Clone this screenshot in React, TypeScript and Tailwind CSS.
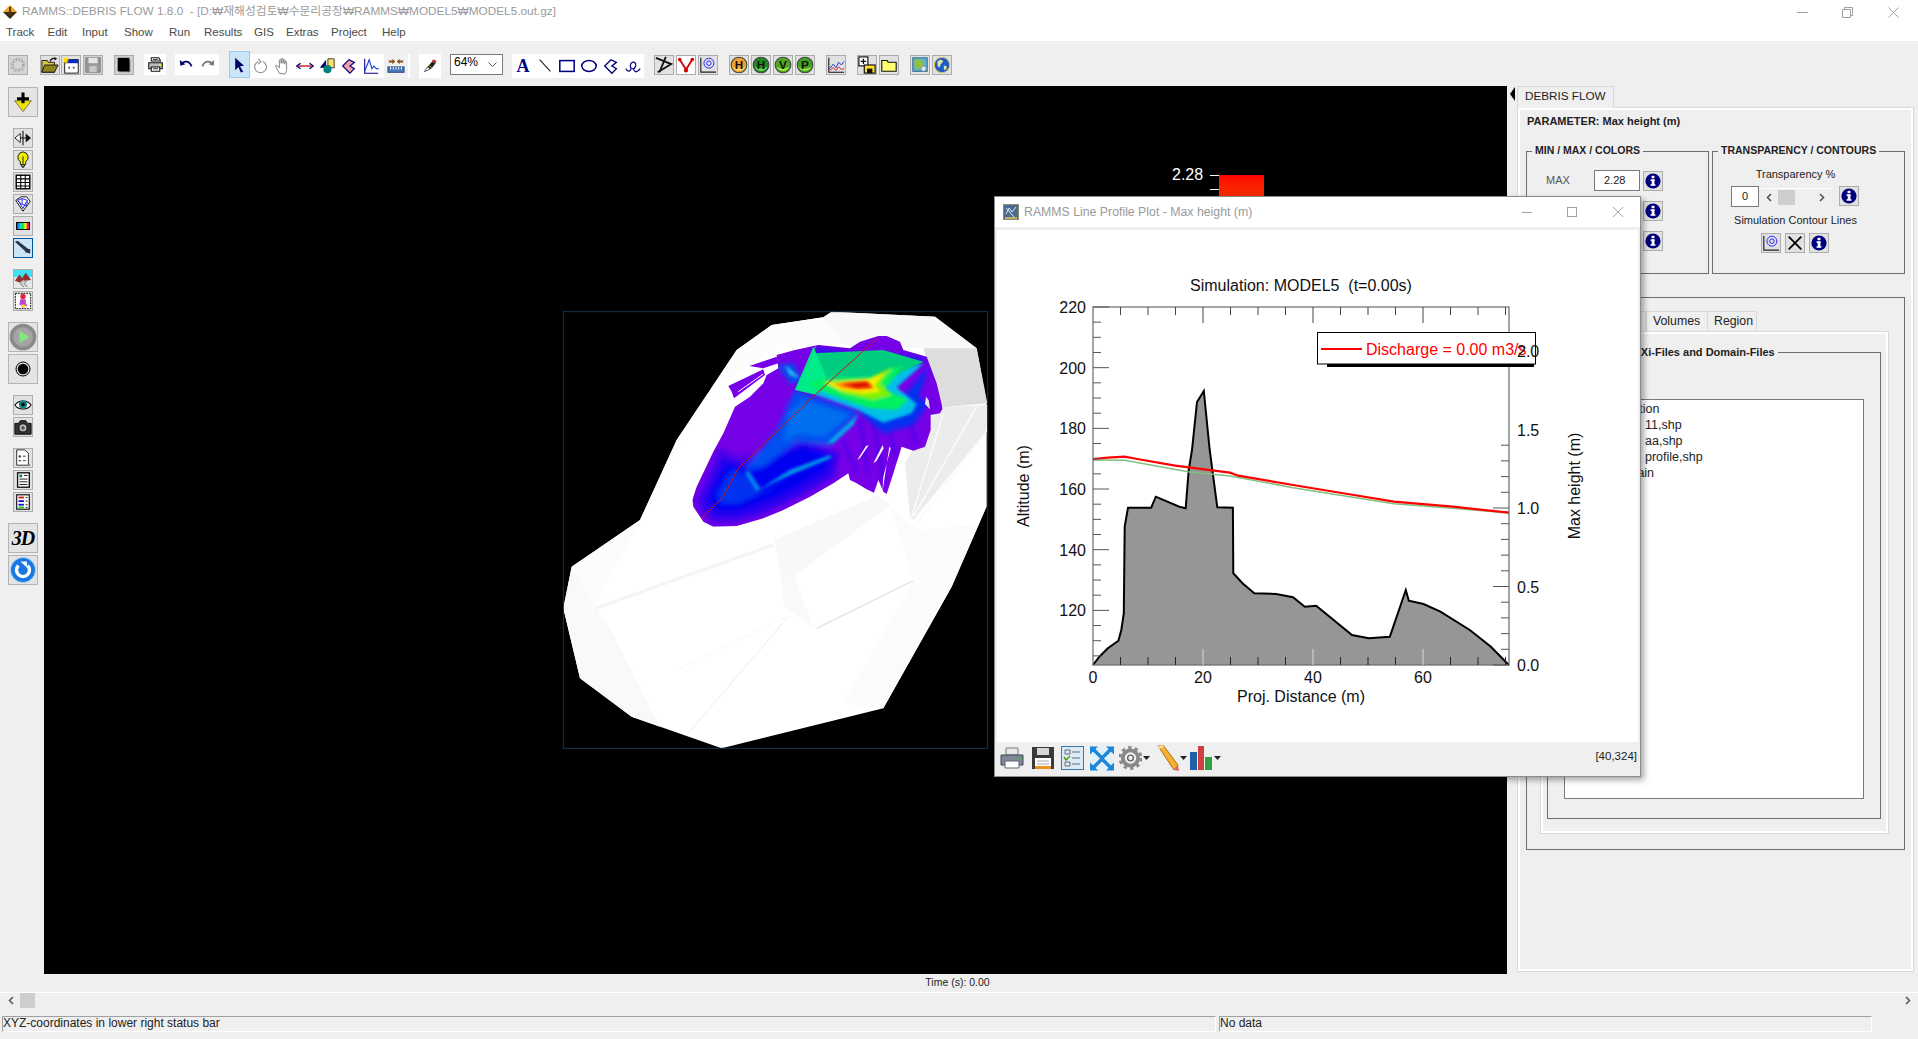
import type { ReactNode } from "react";

const Svg = ({ s = 18, children }: { s?: number; children: ReactNode }) => (
  <svg width={s} height={s} viewBox="0 0 20 20" className="block shrink-0">
    {children}
  </svg>
);

// raised toolbar button, the fill and border come in as whole classes
const Btn = ({
  children,
  className = "",
  tone = "bg-[#e1e1e1] border-[#adadad]",
}: {
  children: ReactNode;
  className?: string;
  tone?: string;
}) => (
  <div className={`w-5 h-5 shrink-0 border flex items-center justify-center ${tone} ${className}`}>{children}</div>
);

const BigBtn = ({ children, className = "" }: { children: ReactNode; className?: string }) => (
  <div className={`w-[30px] h-[30px] shrink-0 border border-[#b4b4b4] bg-[#e4e4e4] flex items-center justify-center ${className}`}>
    {children}
  </div>
);

const Flat = ({ children }: { children: ReactNode }) => (
  <div className="w-[22px] h-6 shrink-0 flex items-center justify-center">{children}</div>
);

const InfoIcon = () => (
  <Svg s={16}>
    <circle cx="10" cy="10" r="9.5" fill="#000080" />
    <rect x="8.2" y="3.5" width="3.6" height="3" fill="#fff" />
    <rect x="7" y="8" width="5" height="2" fill="#fff" />
    <rect x="8.4" y="8" width="3.4" height="7" fill="#fff" />
    <rect x="7" y="14" width="6" height="2" fill="#fff" />
  </Svg>
);

const Info = () => (
  <Btn>
    <InfoIcon />
  </Btn>
);

const Ball = ({ c1, c2, t }: { c1: string; c2: string; t: string }) => (
  <Svg>
    <circle cx="10" cy="10" r="8.7" fill={c1} stroke="#444" strokeWidth="1.2" />
    <path d="M3 12a7.5 7 0 0 0 14 0a9 6 0 0 1-14 0z" fill={c2} />
    <text x="10" y="14.5" textAnchor="middle" fontSize="13" fontWeight="700" fontFamily="Liberation Sans" fill="#111">
      {t}
    </text>
  </Svg>
);

const ContourIcon = () => (
  <Svg>
    <path d="M2 2v16h17" fill="none" stroke="#222" strokeWidth="1.3" />
    <circle cx="11" cy="8" r="5.5" fill="none" stroke="#1a1aff" strokeWidth="1" />
    <circle cx="11" cy="8" r="2.5" fill="none" stroke="#1a1aff" strokeWidth="1" />
  </Svg>
);

const PrinterIcon = ({ s = 18 }: { s?: number }) => (
  <Svg s={s}>
    <path d="M5 2h9l2 4H5z" fill="#fff" stroke="#111" strokeWidth="1.2" />
    <path d="M2 8h16v7H2z" fill="#bbb" stroke="#111" strokeWidth="1.2" />
    <path d="M5 13h10v5H5z" fill="#fff" stroke="#111" strokeWidth="1.2" />
    <path d="M7 4h6M7 15h6" stroke="#111" />
    <rect x="14" y="9.5" width="2.5" height="1.5" fill="#ff0" />
  </Svg>
);

function TitleBar() {
  const menus = [
    ["Track", "w-[41.5px]"],
    ["Edit", "w-[34.5px]"],
    ["Input", "w-[42px]"],
    ["Show", "w-[45px]"],
    ["Run", "w-[35px]"],
    ["Results", "w-[50px]"],
    ["GIS", "w-[32px]"],
    ["Extras", "w-[45px]"],
    ["Project", "w-[51px]"],
    ["Help", "w-[40px]"],
  ];
  return (
    <div className="h-[41px] bg-white shrink-0">
      <div className="h-[24px] flex items-center pl-[3px]">
        <svg width="14" height="14" viewBox="0 0 14 14" className="shrink-0">
          <path d="M7 0l7 7H0z" fill="#e8a41c" />
          <path d="M7 14l7-7H0z" fill="#3a2a10" />
          <path d="M6 2h2v8H6z" fill="#5a3a10" />
        </svg>
        <span className="ml-[5px] text-[11.8px] text-[#9b9b9b] whitespace-pre leading-none">
          RAMMS::DEBRIS FLOW 1.8.0  - [D:₩재해성검토₩수문리공장₩RAMMS₩MODEL5₩MODEL5.out.gz]
        </span>
        <div className="ml-auto flex items-center">
          <div className="w-[11px] h-px bg-[#a0a0a0] mr-[34px]" />
          <svg width="11" height="11" viewBox="0 0 11 11" className="mr-[35px]">
            <path d="M2.5 2.5V.5h8v8h-2M.5 2.5h8v8h-8z" fill="none" stroke="#a0a0a0" />
          </svg>
          <svg width="11" height="11" viewBox="0 0 11 11" className="mr-[19px]">
            <path d="M.5.5l10 10M10.5.5l-10 10" stroke="#a0a0a0" />
          </svg>
        </div>
      </div>
      <div className="h-[17px] flex items-center pl-[6px] text-[11.5px] text-[#4a4a4a] leading-none">
        {menus.map(([m, w]) => (
          <span key={m} className={w}>
            {m}
          </span>
        ))}
      </div>
    </div>
  );
}

function Toolbar() {
  return (
    <div className="h-[45px] shrink-0 bg-[#efefef] flex items-start pt-[14px] pl-2">
      <Btn tone="bg-[#d6d6d6] border-[#adadad]">
        <Svg>
          <circle cx="10" cy="10" r="6" fill="none" stroke="#a8a8a8" strokeWidth="3" strokeDasharray="2 1.5" />
          <circle cx="10" cy="10" r="7.8" fill="none" stroke="#bcbcbc" strokeWidth="2" strokeDasharray="2 3" />
        </Svg>
      </Btn>
      <Btn className="ml-3">
        <Svg>
          <path d="M1 5h6l1 2h7v11H1z" fill="#d8c848" stroke="#111" />
          <path d="M4 10h15l-4 8H1z" fill="#8c8420" stroke="#111" />
          <path d="M10 6c1-3 4-4 6-3" fill="none" stroke="#111" strokeWidth="1.5" />
          <path d="M15 1l3 2-3 2z" fill="#111" />
        </Svg>
      </Btn>
      <Btn className="ml-[1px]">
        <Svg>
          <rect x="3" y="4" width="15" height="15" fill="#fff" stroke="#111" />
          <rect x="3" y="4" width="15" height="4" fill="#0a28c8" />
          <path d="M2 1l2 2 1-2 1 3 2 0-2 2 0 3-2-2-3 1 1-3z" fill="#ffd800" />
          <rect x="7" y="12" width="2" height="2" fill="#555" />
          <rect x="12" y="12" width="2" height="2" fill="#555" />
        </Svg>
      </Btn>
      <Btn className="ml-[2px]" tone="bg-[#d2d2d2] border-[#adadad]">
        <Svg>
          <path d="M2 2h16v16H2z" fill="#9a9a9a" stroke="#777" />
          <rect x="5" y="2" width="10" height="6" fill="#e6e6e6" />
          <rect x="6" y="11" width="8" height="7" fill="#c8c8c8" />
        </Svg>
      </Btn>
      <Btn className="ml-[11px]" tone="bg-[#cfcfcf] border-[#adadad]">
        <Svg>
          <rect x="5" y="4" width="12" height="14" fill="#777" />
          <rect x="3" y="2" width="13" height="15" fill="#000" />
        </Svg>
      </Btn>
      <div className="ml-[10px] -mt-px w-[22px] h-[21px] bg-white flex items-center justify-center shrink-0">
        <PrinterIcon s={17} />
      </div>
      <div className="ml-[9px] -mt-px w-[44px] h-[21px] bg-white flex items-center shrink-0">
        <div className="w-[22px] flex justify-center">
          <Svg s={14}>
            <path d="M4 9c3-6 11-5 14 3" fill="none" stroke="#000070" strokeWidth="2.5" />
            <path d="M1 3l1 8 7-2z" fill="#000070" />
          </Svg>
        </div>
        <div className="w-[22px] flex justify-center">
          <Svg s={14}>
            <path d="M16 9C13 3 5 4 2 12" fill="none" stroke="#777" strokeWidth="2.5" />
            <path d="M19 3l-1 8-7-2z" fill="#777" />
          </Svg>
        </div>
      </div>
      <div className="ml-[10px] -mt-1 w-[21px] h-[27px] bg-[#cce4f7] border border-[#99c9ef] flex items-center justify-center shrink-0">
        <Svg s={16}>
          <path d="M4 1l11 10-5 .5 4 7-3 1-3-7-4 4z" fill="#000060" />
        </Svg>
      </div>
      <div className="-mt-[1px] h-6 w-[160px] bg-white flex items-center shrink-0">
        <Flat>
          <Svg>
            <path d="M7 5a6.5 6.5 0 1 0 5 0" fill="none" stroke="#8a8a8a" strokeWidth="1.2" />
            <path d="M7 2l3 3-3 3" fill="none" stroke="#8a8a8a" strokeWidth="1.2" />
          </Svg>
        </Flat>
        <Flat>
          <Svg>
            <path
              d="M6 18L2 11c-1-2 1-2 2-1l2 2V4c0-2 2-2 2 0v3-4c0-2 2-2 2 0v4-3c0-2 2-2 2 0v4-2c0-2 2-2 2 0v8c0 2-1 3-2 5z"
              fill="#fff"
              stroke="#777"
            />
          </Svg>
        </Flat>
        <Flat>
          <Svg>
            <path d="M3 10h14" stroke="#d01010" strokeWidth="1.5" />
            <path d="M5 7l-4 3 4 3M15 7l4 3-4 3" fill="none" stroke="#000080" strokeWidth="1.5" />
          </Svg>
        </Flat>
        <Flat>
          <Svg>
            <path d="M11 2h7v10h-7z" fill="#ffe060" stroke="#333" />
            <path d="M9 3v9H2z" fill="#000060" />
            <circle cx="10.500" cy="13.500" r="4.500" fill="#008080" />
          </Svg>
        </Flat>
        <Flat>
          <Svg>
            <path d="M3 10l7-7 6 3-5 4 5 3-5 5z" fill="#f4a0a8" stroke="#000080" strokeWidth="1.3" />
          </Svg>
        </Flat>
        <Flat>
          <Svg>
            <path d="M3 2v16h15" fill="none" stroke="#000080" strokeWidth="1.2" />
            <path d="M3 16L8 3l3 10 2-3 3 3h3" fill="none" stroke="#1838d8" strokeWidth="1.2" />
          </Svg>
        </Flat>
        <div className="w-[28px] flex justify-center">
          <div className="w-[24px] h-[24px] bg-[#f0f0f0] flex items-center justify-center">
            <Svg>
              <path d="M2 5h6M12 5h6" stroke="#8a5010" strokeWidth="2" />
              <path d="M6 2l3 3-3 3M14 2l-3 3 3 3" fill="#8a5010" />
              <rect x="1" y="11" width="18" height="6" fill="#4878b8" stroke="#204880" />
              <path d="M4 11v3M7 11v3M10 11v3M13 11v3M16 11v3" stroke="#fff" />
            </Svg>
          </div>
        </div>
      </div>
      <div className="ml-[9px] -mt-px w-[22px] h-6 bg-white flex items-center justify-center shrink-0">
        <Svg s={16}>
          <path d="M3 17l4-6 3 3z" fill="#fff" stroke="#333" />
          <path d="M7 11l6-7 4 3-6 7z" fill="#222" />
          <path d="M12 3l5 4 1-3-3-2z" fill="#d02020" />
          <path d="M8 9l5 4" stroke="#e8c020" />
        </Svg>
      </div>
      <div className="ml-[9px] -mt-px w-[53px] h-[21px] bg-white border border-[#7a7a7a] flex items-start pl-[3px] text-[12px] leading-[15px] shrink-0">
        64%
        <svg width="9" height="5" viewBox="0 0 9 5" className="ml-auto mr-[5px] mt-[7px]">
          <path d="M.5.5l4 4 4-4" fill="none" stroke="#555" />
        </svg>
      </div>
      <div className="ml-[9px] -mt-px w-[132px] h-6 bg-white flex items-center shrink-0">
        <Flat>
          <span className="font-['Liberation_Serif',serif] font-bold text-[18px] leading-none text-[#000080]">A</span>
        </Flat>
        <Flat>
          <Svg>
            <path d="M4 3l12 13" stroke="#222" strokeWidth="1.2" />
          </Svg>
        </Flat>
        <Flat>
          <Svg>
            <rect x="2" y="4" width="16" height="12" fill="none" stroke="#000080" strokeWidth="1.7" />
          </Svg>
        </Flat>
        <Flat>
          <Svg>
            <ellipse cx="10" cy="10" rx="8" ry="6" fill="none" stroke="#000080" strokeWidth="1.7" />
          </Svg>
        </Flat>
        <Flat>
          <Svg>
            <path d="M3 10l7-7 6 3-5 4 5 3-5 5z" fill="none" stroke="#000080" strokeWidth="1.5" />
          </Svg>
        </Flat>
        <Flat>
          <Svg>
            <path d="M2 13c3 5 5 2 6 0-4-8 6-10 5-3-1 3-3 3-3 3 3 5 5 4 8 0" fill="none" stroke="#000080" strokeWidth="1.4" />
          </Svg>
        </Flat>
      </div>
      <Btn className="ml-[10px]">
        <Svg>
          <path d="M1 2l17 7L3 18" fill="none" stroke="#111" strokeWidth="2" />
          <path d="M12 1L5 18" stroke="#111" strokeWidth="2" />
        </Svg>
      </Btn>
      <Btn className="ml-[2px]" tone="bg-white border-[#adadad]">
        <Svg>
          <path d="M3 4l7 11 7-11" fill="none" stroke="#d00000" strokeWidth="2" />
          <circle cx="3" cy="4" r="2" fill="#d00000" />
          <circle cx="17" cy="4" r="2" fill="#d00000" />
          <circle cx="10" cy="16" r="2.3" fill="#d00000" />
        </Svg>
      </Btn>
      <Btn className="ml-[2px]">
        <ContourIcon />
      </Btn>
      <Btn className="ml-[11px]">
        <Ball c1="#f0a030" c2="#ffe070" t="H" />
      </Btn>
      <Btn className="ml-[2px]">
        <Ball c1="#208820" c2="#80e060" t="H" />
      </Btn>
      <Btn className="ml-[2px]">
        <Ball c1="#50a820" c2="#b0f040" t="V" />
      </Btn>
      <Btn className="ml-[2px]">
        <Ball c1="#40a020" c2="#a0e840" t="P" />
      </Btn>
      <Btn className="ml-[11px]">
        <Svg>
          <path d="M2 2v16h17" fill="none" stroke="#111" strokeWidth="1.2" />
          <path d="M3 14l4-5 3 4 3-6 3 3 3-4" fill="none" stroke="#1030d0" />
          <path d="M3 16l4-3 3 3 3-4 3 3 3-1" fill="none" stroke="#e01010" />
        </Svg>
      </Btn>
      <Btn className="ml-[11px]">
        <Svg>
          <rect x="1" y="1" width="10" height="10" fill="#fff" stroke="#111" strokeWidth="1.3" />
          <path d="M3 6h6M6 3v6" stroke="#111" strokeWidth="1.5" />
          <rect x="7" y="10" width="12" height="9" fill="#ffe030" stroke="#111" strokeWidth="1.3" />
          <rect x="10" y="14" width="6" height="5" fill="#111" />
        </Svg>
      </Btn>
      <Btn className="ml-[2px]">
        <Svg>
          <path d="M2 5h6l1 2h9v10H2z" fill="#ffff70" stroke="#111" strokeWidth="1.2" />
        </Svg>
      </Btn>
      <Btn className="ml-[11px]">
        <Svg>
          <rect x="2" y="2" width="16" height="15" fill="#60b0d0" stroke="#206080" />
          <path d="M4 4l8 0 2 6-6 5-4-3z" fill="#90c040" />
          <circle cx="14" cy="14" r="3" fill="#d0e8f8" stroke="#888" />
        </Svg>
      </Btn>
      <Btn className="ml-[2px]">
        <Svg>
          <circle cx="10" cy="10" r="8.500" fill="#1c5cc8" stroke="#f0c840" strokeWidth="1" />
          <path d="M5 6c3-3 6-2 6 0s-3 2-3 5-3 1-3-1zM12 11c3-1 4 1 3 3s-3 2-3 0z" fill="#e8e0a0" />
        </Svg>
      </Btn>
    </div>
  );
}

function Sidebar() {
  return (
    <div className="w-[44px] shrink-0 flex flex-col items-start pt-px">
      <BigBtn className="ml-2">
        <Svg s={24}>
          <path d="M3 9h14l-7 9z" fill="#f0e000" stroke="#555" strokeWidth=".6" />
          <path d="M8.700 2h2.600v4H15v2.600H5V6h3.700z" fill="#000" />
          <path d="M8.700 8h2.600v3H8.700z" fill="#000" />
        </Svg>
      </BigBtn>
      <div className="ml-[13px] mt-[11px] flex flex-col gap-[2px]">
        <Btn>
          <Svg>
            <path d="M1 10l6-5v10z" fill="#fff" stroke="#111" />
            <path d="M19 10l-6-5v10z" fill="#111" />
            <path d="M10 2v16M7 10h6" stroke="#111" strokeWidth="1.2" />
          </Svg>
        </Btn>
        <Btn>
          <Svg>
            <path d="M10 1a6 6 0 0 1 3 11v3H7v-3a6 6 0 0 1 3-11z" fill="#f0f000" stroke="#111" />
            <path d="M8 15l1 3h2l1-3" fill="#888" stroke="#111" />
            <path d="M10 6v9" stroke="#111" />
          </Svg>
        </Btn>
        <Btn>
          <Svg>
            <rect x="2.500" y="2.500" width="15" height="15" fill="#fff" stroke="#000" strokeWidth="1.5" />
            <path d="M7.500 2v16M12.500 2v16M2 6.500h16M2 10.500h16M2 14.500h16" stroke="#000" strokeWidth="1.2" />
          </Svg>
        </Btn>
        <Btn>
          <Svg>
            <path d="M2 6l6-4h6l4 5-8 11z" fill="#fff" stroke="#000" />
            <path d="M4 6l5-2 6 2-1 6-6-2zM5 7l5 8M9 4v6M14 7l-4 8" fill="none" stroke="#1a1ae0" />
          </Svg>
        </Btn>
        <Btn>
          <svg width="14" height="8" viewBox="0 0 14 8" className="block">
            <defs>
              <linearGradient id="rb">
                <stop offset="0" stopColor="#2020ff" />
                <stop offset=".3" stopColor="#00e0e0" />
                <stop offset=".5" stopColor="#20e020" />
                <stop offset=".7" stopColor="#ffff00" />
                <stop offset=".85" stopColor="#ff2020" />
                <stop offset="1" stopColor="#e000e0" />
              </linearGradient>
            </defs>
            <rect x=".5" y=".5" width="13" height="7" fill="url(#rb)" stroke="#000" />
          </svg>
        </Btn>
        <Btn tone="bg-[#cce4f7] border-[#005499]">
          <Svg>
            <path d="M1 3l3-1 12 9 2 0 0 5-5-1-1-2z" fill="#2c3448" />
          </Svg>
        </Btn>
      </div>
      <div className="ml-[13px] mt-[11px] flex flex-col gap-[2px]">
        <Btn>
          <Svg>
            <rect width="20" height="8" fill="#40e0f0" />
            <rect y="8" width="20" height="12" fill="#e8e8e8" />
            <path d="M1 12l5-7 3 4 4-6 6 8-6 1-4 0-3 2z" fill="#903030" />
            <path d="M15 11l-4 4 4 4M11 11l-4 4 4 4" fill="none" stroke="#a0a0a0" strokeWidth="1.5" />
          </Svg>
        </Btn>
        <Btn>
          <Svg>
            <rect x="1.500" y="1.500" width="17" height="17" fill="#fff" stroke="#000" strokeDasharray="2 1" />
            <circle cx="10" cy="5" r="3" fill="#e02040" />
            <path d="M7 8h6v4l2 4-3-1-2 3-2-3-2-1z" fill="#c040d0" />
            <path d="M8 14h4v3H8z" fill="#f0e020" />
          </Svg>
        </Btn>
      </div>
      <BigBtn className="ml-2 mt-[11px]">
        <Svg s={28}>
          <circle cx="10" cy="10" r="9.500" fill="#8a8a8a" />
          <circle cx="10" cy="10" r="7" fill="#a4a4a4" />
          <path d="M7.500 5.500l7 4.500-7 4.500z" fill="#80e880" />
        </Svg>
      </BigBtn>
      <BigBtn className="ml-2 mt-[2px]">
        <Svg s={20}>
          <circle cx="10" cy="10" r="7" fill="none" stroke="#000" strokeWidth="1" />
          <circle cx="10" cy="10" r="5.300" fill="#000" />
        </Svg>
      </BigBtn>
      <div className="ml-[13px] mt-[11px] flex flex-col gap-[2px]">
        <Btn>
          <Svg>
            <path d="M1 10c4-6 14-6 18 0-4 6-14 6-18 0z" fill="#fff" stroke="#000" strokeWidth="1.2" />
            <circle cx="10" cy="9.500" r="4.500" fill="#108080" />
            <circle cx="10" cy="9.500" r="2" fill="#000" />
          </Svg>
        </Btn>
        <Btn>
          <Svg>
            <path d="M1 6h4l2-3h6l2 3h4v12H1z" fill="#333" stroke="#000" />
            <circle cx="10" cy="11" r="4.500" fill="#bbb" stroke="#000" />
            <circle cx="10" cy="11" r="2" fill="#555" />
          </Svg>
        </Btn>
      </div>
      <div className="ml-[13px] mt-[11px] flex flex-col gap-[2px]">
        <Btn>
          <Svg>
            <path d="M3 1h9l4 4v13H3z" fill="#fff" stroke="#222" />
            <path d="M5 8h3M6.500 7v3M5 13h3M10 8h3M10 13h3" stroke="#222" />
            <rect x="16" y="17" width="2" height="2" fill="#888" />
          </Svg>
        </Btn>
        <Btn>
          <Svg>
            <rect x="4" y="2" width="13" height="16" fill="#fff" stroke="#111" strokeWidth="1.5" />
            <path d="M6 9h9M6 12h9M6 15h9" stroke="#111" />
            <rect x="6" y="4" width="3" height="3" fill="#108040" />
            <path d="M11 5h4" stroke="#111" />
          </Svg>
        </Btn>
        <Btn>
          <Svg>
            <rect x="3" y="2" width="14" height="16" fill="#fff" stroke="#111" strokeWidth="1.3" />
            <path d="M5 5h6" stroke="#e01010" strokeWidth="2" />
            <path d="M5 9h6" stroke="#1010e0" strokeWidth="2" />
            <path d="M5 13h6" stroke="#1010e0" strokeWidth="2" />
            <path d="M5 16h6" stroke="#10d010" strokeWidth="2" />
            <path d="M13 5h2M13 9h2M13 13h2M13 16h2" stroke="#111" />
          </Svg>
        </Btn>
      </div>
      <BigBtn className="ml-2 mt-[11px]">
        <span className="font-['Liberation_Serif',serif] italic font-bold text-[20px] leading-none text-black tracking-[-1px]">3D</span>
      </BigBtn>
      <BigBtn className="ml-2 mt-[2px]">
        <Svg s={26}>
          <circle cx="10" cy="10" r="9.600" fill="#1878e0" />
          <circle cx="10" cy="10" r="9.600" fill="none" stroke="#a8d4f8" strokeWidth=".8" />
          <path d="M6.500 6.500a5 5 0 1 0 7 0" fill="none" stroke="#fff" strokeWidth="2.600" />
          <path d="M8 3.500h5v4.500z" fill="#fff" />
        </Svg>
      </BigBtn>
    </div>
  );
}

function TerrainMap() {
  return (
    <svg width="450" height="460" viewBox="0 0 1350 1380" className="absolute left-[506px] top-[214px]">
      <defs>
        <clipPath id="flowClip">
          <path d="M427 600L440 560 490 455 520 400 555 320 600 290 640 250 650 225 685 205 680 165 735 150 780 140 805 135 900 145 930 125 985 108 1010 108 1050 125 1060 150 1130 170 1160 250 1178 325 1170 340 1142 345 1142 390 1125 440 1090 452 1055 440 1030 520 1010 582 1000 575 985 540 972 578 950 568 920 550 900 540 895 520 850 550 780 590 700 630 640 655 560 678 490 680 460 665 430 620z" />
        </clipPath>
        <filter id="soft" x="-10%" y="-10%" width="120%" height="120%">
          <feGaussianBlur stdDeviation="8" />
        </filter>
        <filter id="soft2" x="-10%" y="-10%" width="120%" height="120%">
          <feGaussianBlur stdDeviation="5" />
        </filter>
      </defs>
      <path
        d="M40 925L65 800 270 660 380 420 560 150 665 75 820 52 845 35 1155 50 1280 145 1310 310 1310 620 1205 860 1000 1225 515 1345 245 1250 90 1135z"
        fill="#fff"
      />
      <path d="M40 925L65 800 135 920 170 965 330 1280 245 1250 90 1135z" fill="#f9f9f9" />
      <path d="M65 800L270 660 380 420 560 150 665 75 820 52 870 130 700 130 480 270 430 360 135 920z" fill="#fcfcfc" />
      <path d="M820 52L845 35 1155 50 1280 145 1120 145 880 135z" fill="#f8f8f8" />
      <path d="M1120 145L1280 145 1312 310 1180 322 1145 230z" fill="#dddddd" />
      <path d="M1180 322L1312 315 1312 390 1090 660 1080 650 1065 490 1145 350z" fill="#ececec" />
      <path d="M1100 690L1285 675 1205 860 1090 840 1020 620z" fill="#fbfbfb" />
      <path d="M670 720L730 830 1020 615 985 585z" fill="#f8f8f8" />
      <path d="M675 725L705 920 790 985 735 830z" fill="#f9f9f9" />
      <path d="M880 1210L1000 1225 1205 860 1090 845z" fill="#fbfbfb" />
      <path d="M1090 650L1280 320M1100 670L1312 390M1085 650L1180 340" stroke="#fafafa" strokeWidth="5" fill="none" />
      <path d="M800 985L1090 842" stroke="#e8e8e8" strokeWidth="5" />
      <path d="M410 1305L715 950" stroke="#ececec" strokeWidth="3" />
      <path d="M135 925L670 735" stroke="#f5f5f5" strokeWidth="10" />
      <path d="M380 1110L710 950" stroke="#f9f9f9" strokeWidth="4" />

      {/* flow heights, purple up to red */}
      <path d="M535 258L640 208 645 225 552 295 545 275z" fill="#7800e8" />
      <path d="M598 198L680 170 685 190 640 205z" fill="#7800e8" />
      <path d="M565 275L640 222" stroke="#fff" strokeWidth="3" />
      <g clipPath="url(#flowClip)">
        <rect x="400" y="90" width="800" height="610" fill="#7600e6" />
        <path d="M930 360L955 520M970 370L1000 540M1010 370L1040 470M1080 370L1100 430M880 420L920 520" stroke="#5a00ea" strokeWidth="14" filter="url(#soft2)" />
        <g filter="url(#soft)">
          <path d="M435 600L505 440 570 470 760 410 870 455 860 530 780 580 690 625 620 655 550 672 490 672 450 640z" fill="#5000ea" />
          <path d="M455 600L515 470 575 490 760 425 860 462 845 525 770 570 690 610 620 640 550 655 495 655 465 630z" fill="#2000f0" />
          <path d="M480 590L530 495 585 510 760 440 840 470 820 512 680 590 560 632 500 632z" fill="#0000f0" />
          <path d="M500 580L545 510 600 530 640 580 820 480 690 550 570 610 510 610z" fill="#0030f0" />
          <path d="M680 195L730 190 760 245 720 250z" fill="#0050ec" />
          <path d="M735 270L925 335 840 435 740 425 640 500 585 510 680 390z" fill="#0050f0" />
          <path d="M760 300L900 345 820 410 740 400 700 430 720 340z" fill="#0070f0" />
          <path d="M925 335L1000 400 1090 375 1135 310 1105 290 1140 195 1060 290z" fill="#0030f0" />
          <path d="M800 140L890 155 1120 168 1130 190 790 170z" fill="#3010f0" />
        </g>
        <g filter="url(#soft2)">
          <path d="M625 570L720 510 840 465 845 473 720 525z" fill="#00a0e8" />
          <path d="M830 430L900 365 925 340 910 375 850 430z" fill="#00b0e8" />
          <path d="M590 515L625 570" stroke="#0090e8" strokeWidth="12" />
          <path d="M705 195L750 235 720 225z" fill="#30c8e8" />
          <path d="M800 285L925 330 1000 368 1085 340 1100 312 1040 262 1122 190 1050 205 960 235 770 245z" fill="#00c0e8" />
        </g>
        <path d="M785 160L890 155 1000 150 1120 185 1020 235 960 240 850 235 775 245z" fill="#00cc80" />
        <path d="M735 270L790 140 830 235 800 285z" fill="#00ec88" />
        <g filter="url(#soft2)">
          <path d="M772 248L850 232 960 232 1060 195 1020 250 1005 268 1075 300 1040 330 960 325 820 275z" fill="#00f060" />
          <path d="M820 245L960 235 1030 200 990 250 1025 285 970 300 880 280z" fill="#80f000" />
          <path d="M830 250L960 237 1005 215 975 255 990 275 940 282 870 270z" fill="#f0f000" />
          <path d="M850 250L950 240 975 265 930 272 875 265z" fill="#ff9000" />
        </g>
        <path d="M875 253L950 245 965 262 920 265z" fill="#e01000" filter="url(#soft2)" />
        <path d="M735 270L785 155 800 135 760 230z" fill="#00e090" />
      </g>
      <path d="M948 438L922 480 930 474 956 436zM998 435L970 490 980 482 1001 445zM1018 440L997 578 1000 530 1022 445z" fill="#fff" />
      <path d="M1128 290L1125 312 1140 328 1136 300z" fill="#e8e8e8" />
      <path d="M455 655L520 590 565 505 800 280 985 112" fill="none" stroke="#d01010" strokeWidth="3" />
      <rect x="40" y="35" width="1273" height="1310" fill="none" stroke="#173252" strokeWidth="3" />
    </svg>
  );
}

const terrain =
  "1093,665 1099.4,656.7 1107.8,648.3 1118.4,640.7 1121.3,630 1123.8,613.3 1124.7,526.7 1128,507.7 1151.2,507.7 1155.8,496.7 1179.4,506.7 1185.7,508.3 1188.7,470 1192,450 1197,402 1203.8,391 1209.7,450 1217.3,507.3 1232.9,507.7 1233.3,573.3 1242.5,583.3 1254.3,593.3 1276.2,594 1293,597.3 1304.8,606.7 1316.2,605.7 1352,635 1368.8,638.3 1389.8,636.7 1405.8,590 1408.8,600.7 1423.5,604 1440.4,611.7 1469.8,630 1490.9,646.7 1505.6,661.7 1509,665";
const redLine =
  "1093,459 1107.8,457.7 1124.7,456.7 1137.3,459 1175.2,465.7 1229.9,472.7 1238.3,475.7 1293,485 1347.8,494 1394,501.7 1452.8,506.7 1509,512.7";
const greenLine = "1093,460 1124.7,460.3 1188,471.7 1229.9,476 1293,487.7 1394,503.7 1452.8,508.2 1509,513";

const leftTicks = Array.from({ length: 24 }, (_, i) => 105 + i * 5);
const xTicks = Array.from({ length: 15 }, (_, i) => 5 + i * 5);
const rightTicks = Array.from({ length: 15 }, (_, i) => i);

function ProfileChart() {
  return (
    <svg width="640" height="512" viewBox="997 230 640 512" className="block font-['Liberation_Sans',sans-serif]">
      <text x="1301" y="291" textAnchor="middle" fontSize="16" fill="#111" xmlSpace="preserve">
        Simulation: MODEL5  (t=0.00s)
      </text>
      <polygon points={terrain} fill="#969696" />
      <polyline points={terrain} fill="none" stroke="#000" strokeWidth="2" />
      <polyline points={greenLine} fill="none" stroke="#80c080" strokeWidth="1.6" />
      <polyline points={redLine} fill="none" stroke="#ff0000" strokeWidth="2.2" />
      <rect x="1093" y="307" width="416" height="358" fill="none" stroke="#6a6a6a" strokeWidth="1.2" />
      {leftTicks.map((v) => {
        const y = 665 - (v - 102) * 3.034;
        return <path key={v} d={`M1093 ${y}h${v % 20 === 0 ? 16 : 8}`} stroke="#555" />;
      })}
      {rightTicks.map((i) => {
        const y = 665 - i * 15.7;
        return <path key={i} d={`M1509 ${y}h${i % 5 === 0 ? -16 : -8}`} stroke="#555" />;
      })}
      {xTicks.map((v) => {
        const x = 1093 + v * 5.5;
        const len = v % 20 === 0 ? 16 : 8;
        return (
          <g key={v} stroke="#444">
            <path d={`M${x} 307v${len}`} />
            <path d={`M${x} 665v${-len}`} stroke={v % 20 === 0 ? "#d8d8d8" : "#222"} />
          </g>
        );
      })}
      <g fontSize="16" fill="#111">
        {[220, 200, 180, 160, 140, 120].map((v) => (
          <text key={v} x="1086" y={665 - (v - 102) * 3.034 + 6} textAnchor="end">
            {v}
          </text>
        ))}
        {[0, 20, 40, 60].map((v) => (
          <text key={v} x={1093 + v * 5.5} y="683" textAnchor="middle">
            {v}
          </text>
        ))}
        <text x="1301" y="702" textAnchor="middle">
          Proj. Distance (m)
        </text>
        <text transform="translate(1029 486) rotate(-90)" textAnchor="middle">
          Altitude (m)
        </text>
        <text transform="translate(1580 486) rotate(-90)" textAnchor="middle">
          Max height (m)
        </text>
      </g>
      <rect x="1327" y="362" width="207" height="5" fill="#000" />
      <rect x="1317.5" y="332.5" width="218" height="31.5" fill="#fff" stroke="#000" strokeWidth="1" />
      <path d="M1321 349h41" stroke="#ff0000" strokeWidth="2" />
      <text x="1366" y="355" fontSize="16" fill="#ff0000">
        Discharge = 0.00 m3/s
      </text>
      <g fontSize="16" fill="#111">
        {[
          ["2.0", 351],
          ["1.5", 429.5],
          ["1.0", 508],
          ["0.5", 586.5],
          ["0.0", 665],
        ].map(([t, y]) => (
          <text key={t} x="1517" y={Number(y) + 6}>
            {t}
          </text>
        ))}
      </g>
    </svg>
  );
}

function ProfileWindow() {
  return (
    <div className="absolute left-[994px] top-[196px] w-[647px] h-[581px] bg-[#efefef] border border-[#8c8c8c] shadow-[3px_3px_6px_rgba(0,0,0,0.35)] flex flex-col">
      <div className="h-[30px] bg-white flex items-center shrink-0 pl-2">
        <svg width="16" height="16" viewBox="0 0 16 16" className="shrink-0">
          <rect x=".5" y=".5" width="15" height="15" fill="#4a6a90" stroke="#8a8a70" />
          <path d="M3 10l3-6 3 4 4-5M3 4l8 9" stroke="#dfe8f0" fill="none" />
          <rect x="2" y="13" width="12" height="2" fill="#c0b070" />
        </svg>
        <span className="ml-[5px] text-[12.3px] text-[#9a9a9a] leading-none">RAMMS Line Profile Plot - Max height (m)</span>
        <div className="ml-auto flex items-center">
          <div className="w-[10px] h-px bg-[#a0a0a0] mr-[35px]" />
          <div className="w-[10px] h-[10px] border border-[#a0a0a0] mr-[36px]" />
          <svg width="10" height="10" viewBox="0 0 10 10" className="mr-[17px]">
            <path d="M0 0l10 10M10 0L0 10" stroke="#a0a0a0" />
          </svg>
        </div>
      </div>
      <div className="mx-[2px] mt-[3px] h-[512px] bg-white shrink-0">
        <ProfileChart />
      </div>
      <div className="flex-1 flex items-center pl-[5px] pr-[3px] pb-[2px]">
        <svg width="24" height="24" viewBox="0 0 24 24" className="shrink-0">
          <path d="M6 2h12v7H6z" fill="#e8e8e8" stroke="#778" />
          <path d="M1 9h22v10H1z" fill="#7c8898" stroke="#445" />
          <path d="M5 15h14v7H5z" fill="#fff" stroke="#667" />
          <rect x="18" y="11" width="3" height="2" fill="#40b040" />
        </svg>
        <svg width="24" height="24" viewBox="0 0 24 24" className="ml-[7px] shrink-0">
          <path d="M1 1h22v22H1z" fill="#3a3a3a" />
          <rect x="6" y="2" width="12" height="7" fill="#d8d8d8" />
          <rect x="4" y="12" width="16" height="11" fill="#fff" />
          <rect x="4" y="20" width="16" height="3" fill="#f09020" />
          <path d="M6 15h12M6 18h12" stroke="#aaa" />
        </svg>
        <svg width="23" height="24" viewBox="0 0 23 24" className="ml-[6px] shrink-0">
          <rect x=".5" y=".5" width="22" height="23" fill="#dceaf6" stroke="#3a78b0" />
          <path d="M4 4h5v4H4zM4 16h5v4H4zM11 6h8M11 12h8M11 18h8" fill="none" stroke="#667" />
          <path d="M3 11l2 3 4-4" fill="none" stroke="#50a020" strokeWidth="1.6" />
        </svg>
        <svg width="24" height="25" viewBox="0 0 24 24" className="ml-[6px] shrink-0">
          <rect width="24" height="24" fill="#e2f0fa" />
          <path d="M3 3l18 18M21 3L3 21" stroke="#1c86d8" strokeWidth="4" />
          <path d="M10 12L3 5v14zM14 12l7-7v14z" fill="#e2f0fa" />
          <path d="M0 0h8L0 8zM24 0h-8l8 8zM0 24h8l-8-8zM24 24h-8l8-8z" fill="#1c86d8" />
        </svg>
        <svg width="23" height="24" viewBox="0 0 24 24" className="ml-[5px] shrink-0">
          <circle cx="12" cy="12" r="8" fill="none" stroke="#888" strokeWidth="4" />
          <circle cx="12" cy="12" r="11" fill="none" stroke="#8a8a8a" strokeWidth="3" strokeDasharray="3.5 3.5" />
          <circle cx="12" cy="12" r="3" fill="none" stroke="#666" strokeWidth="1.5" />
        </svg>
        <svg width="7" height="4" viewBox="0 0 7 4" className="shrink-0 ml-px">
          <path d="M0 0h7L3.500 4z" fill="#222" />
        </svg>
        <svg width="24" height="26" viewBox="0 0 24 26" className="ml-[5px] shrink-0">
          <path d="M3 1l5-1 15 20-4 5z" fill="#f4b030" stroke="#b07010" />
          <path d="M19 25l4-5 1 6z" fill="#e06070" />
          <path d="M3 1l5-1 1 2-5 2z" fill="#f8e0a0" />
        </svg>
        <svg width="7" height="4" viewBox="0 0 7 4" className="shrink-0 ml-px">
          <path d="M0 0h7L3.500 4z" fill="#222" />
        </svg>
        <svg width="23" height="24" viewBox="0 0 23 24" className="ml-[3px] shrink-0">
          <rect x="0" y="6" width="7" height="18" fill="#2060a8" />
          <rect x="8" y="0" width="6" height="24" fill="#d04040" />
          <rect x="15" y="11" width="7" height="13" fill="#30a040" />
        </svg>
        <svg width="7" height="4" viewBox="0 0 7 4" className="shrink-0 ml-px">
          <path d="M0 0h7L3.500 4z" fill="#222" />
        </svg>
        <span className="ml-auto text-[11.5px] text-[#222] leading-none pb-[3px]">[40,324]</span>
      </div>
    </div>
  );
}

function ParamPanel() {
  return (
    <div className="flex-1 flex flex-col min-w-0">
      <div className="flex items-start pl-[3px] h-[21px] shrink-0">
        <svg width="6" height="14" viewBox="0 0 6 14" className="mt-px shrink-0">
          <path d="M5 0v14L0 7z" fill="#000" />
        </svg>
        <div className="ml-px w-[97px] h-[22px] bg-[#efefef] border border-b-0 border-[#d9d9d9] relative z-10 text-[11.7px] pl-[7px] leading-[18px] text-[#222]">
          DEBRIS FLOW
        </div>
      </div>
      <div className="ml-[10px] w-[397px] h-[865px] border border-[#d9d9d9] shrink-0">
        <div className="h-full border-2 border-white pl-[6px] text-[11px] text-[#222]">
          <div className="h-[34px] font-bold leading-[20px] pt-[1px] pl-px">PARAMETER: Max height (m)</div>
          <div className="flex gap-[3px] h-[130px]">
            <fieldset className="w-[183px] h-full border border-[#6e6e6e] min-w-0">
              <legend className="relative -top-px ml-[5px] px-[3px] font-bold text-[10.5px] leading-[14px]">MIN / MAX / COLORS</legend>
              <div className="mt-[12px] pl-[19px] flex flex-col gap-[9px]">
                <div className="flex items-center h-[21px]">
                  <span className="w-[48px] text-[#555]">MAX</span>
                  <div className="w-[46px] h-[21px] bg-white border border-[#7a7a7a] pl-[9px] leading-[18px]">2.28</div>
                  <div className="ml-[3px]">
                    <Info />
                  </div>
                </div>
                <div className="flex items-center h-[21px]">
                  <span className="w-[48px] text-[#555]">MIN</span>
                  <div className="w-[46px] h-[21px] bg-white border border-[#7a7a7a] pl-[9px] leading-[18px]">0.00</div>
                  <div className="ml-[3px]">
                    <Info />
                  </div>
                </div>
                <div className="flex items-center h-[21px]">
                  <span className="w-[48px] text-[#555]">COLOR</span>
                  <div className="w-[46px] h-[21px] bg-[#e1e1e1] border border-[#adadad]" />
                  <div className="ml-[3px]">
                    <Info />
                  </div>
                </div>
              </div>
            </fieldset>
            <fieldset className="w-[193px] h-full border border-[#6e6e6e] min-w-0">
              <legend className="relative -top-px ml-[5px] px-[3px] font-bold text-[10.5px] leading-[14px]">TRANSPARENCY / CONTOURS</legend>
              <div className="w-[165px] text-center mt-[9px] leading-[14px]">Transparency %</div>
              <div className="flex mt-[5px] pl-[18px] h-[21px]">
                <div className="w-[28px] h-[21px] bg-white border border-[#7a7a7a] text-center leading-[18px]">0</div>
                <div className="ml-[2px] w-[71px] h-[17px] border-t border-white flex items-center pl-[5px] mt-[2px]">
                  <svg width="6" height="9" viewBox="0 0 6 9">
                    <path d="M5 1L1.500 4.500 5 8" fill="none" stroke="#555" strokeWidth="1.6" />
                  </svg>
                  <div className="ml-[6px] w-[17px] h-[15px] bg-[#cdcdcd]" />
                  <svg width="6" height="9" viewBox="0 0 6 9" className="ml-[24px]">
                    <path d="M1 1l3.500 3.500L1 8" fill="none" stroke="#555" strokeWidth="1.6" />
                  </svg>
                </div>
                <div className="ml-[7px]">
                  <Info />
                </div>
              </div>
              <div className="w-[165px] text-center mt-[6px] leading-[14px]">Simulation Contour Lines</div>
              <div className="flex gap-1 mt-[6px] pl-[48px]">
                <Btn>
                  <ContourIcon />
                </Btn>
                <Btn>
                  <Svg>
                    <path d="M3 3l14 14M17 3L3 17" stroke="#000" strokeWidth="2" />
                  </Svg>
                </Btn>
                <Info />
              </div>
            </fieldset>
          </div>
          <div className="mt-[23px] w-[379px] h-[553px] border border-[#6e6e6e] pl-[13px] pt-[13px]">
            <div className="flex h-[20px] text-[12.3px]">
              <div className="w-[106px] border border-b-0 border-[#d9d9d9]">Info</div>
              <div className="w-[62px] border border-b-0 border-[#d9d9d9] pl-[6px] leading-[19px]">Volumes</div>
              <div className="w-[49px] border border-b-0 border-l-0 border-[#d9d9d9] pl-[6px] leading-[19px]">Region</div>
            </div>
            <div className="w-[349px] h-[503px] border border-[#d9d9d9]">
              <div className="h-full border-2 border-white pl-[4px] pt-[11px]">
                <fieldset className="w-[334px] h-[474px] border border-[#6e6e6e] min-w-0">
                  <legend className="ml-[22px] px-[3px] font-bold text-[11px] leading-[14px] whitespace-nowrap">Shape-Files, Xi-Files and Domain-Files</legend>
                  <div className="mt-[40px] mx-[16px] h-[400px] bg-white border border-[#7a7a7a] pt-[1px] text-[12.5px] leading-[16px]">
                    <div className="pl-[36px]">Simulation</div>
                    <div className="pl-[80px]">11,shp</div>
                    <div className="pl-[80px]">aa,shp</div>
                    <div className="pl-[80px]">profile,shp</div>
                    <div className="pl-[46px]">Domain</div>
                  </div>
                </fieldset>
              </div>
            </div>
          </div>
        </div>
      </div>
    </div>
  );
}

export default function App() {
  return (
    <div className="relative w-[1918px] h-[1039px] overflow-hidden bg-[#efefef] font-['Liberation_Sans','Noto_Sans_CJK_KR',sans-serif] flex flex-col">
      <TitleBar />
      <Toolbar />
      <div className="h-[888px] flex shrink-0">
        <Sidebar />
        <div className="relative w-[1463px] h-full bg-black shrink-0 overflow-hidden">
          <TerrainMap />
          {/* colour bar of the map */}
          <span className="absolute left-[1128px] top-[80px] text-[16px] leading-[18px] text-white">2.28</span>
          <div className="absolute left-[1166px] top-[89px] w-[9px] h-px bg-white" />
          <div className="absolute left-[1166px] top-[103px] w-[9px] h-px bg-white" />
          <div className="absolute left-[1175px] top-[89px] w-[45px] h-[25px] bg-gradient-to-b from-[#ff0000] to-[#f03000]" />
        </div>
        <ParamPanel />
      </div>
      <div className="h-[19px] shrink-0 border-b border-white text-center text-[10.5px] text-[#222] leading-[16px] pr-[3px]">
        Time (s): 0.00
      </div>
      <div className="h-[15px] shrink-0 flex items-center pl-[8px] pr-[8px]">
        <svg width="6" height="9" viewBox="0 0 6 9">
          <path d="M5 1L1.500 4.500 5 8" fill="none" stroke="#555" strokeWidth="1.5" />
        </svg>
        <div className="ml-[6px] w-[15px] h-[15px] bg-[#cdcdcd]" />
        <svg width="6" height="9" viewBox="0 0 6 9" className="ml-auto mr-[-1px]">
          <path d="M1 1l3.500 3.500L1 8" fill="none" stroke="#555" strokeWidth="1.5" />
        </svg>
      </div>
      <div className="mt-2 h-[16px] ml-[2px] flex text-[12px] leading-[12px] text-[#222] shrink-0">
        <div className="w-[1214px] border-t border-l border-t-[#a0a0a0] border-l-[#a0a0a0] border-b border-r border-b-white border-r-white whitespace-nowrap">
          XYZ-coordinates in lower right status bar
        </div>
        <div className="ml-[3px] w-[653px] border-t border-l border-t-[#a0a0a0] border-l-[#a0a0a0] border-b border-r border-b-white border-r-white">
          No data
        </div>
      </div>
      <ProfileWindow />
    </div>
  );
}
